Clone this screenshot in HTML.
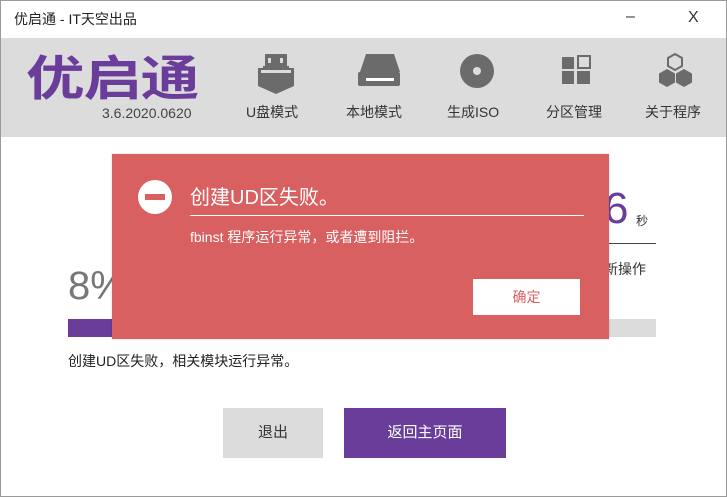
<!DOCTYPE html>
<html><head><meta charset="utf-8"><style>
*{margin:0;padding:0;box-sizing:border-box}
body{width:727px;height:497px;overflow:hidden;background:#fff;font-family:"Liberation Sans","Noto Sans CJK SC",sans-serif;position:relative}
.a{position:absolute;white-space:nowrap}
</style></head><body>
<div class="a" style="left:0;top:0;width:727px;height:497px;border:1px solid #9a9a9a"></div>
<div class="a" style="left:14px;top:9px;font-size:14px;color:#222">优启通 - IT天空出品</div>
<div class="a" style="left:626px;top:8px;font-size:16px;color:#333">–</div>
<div class="a" style="left:688px;top:9px;font-size:16px;color:#333">X</div>
<div class="a" style="left:1px;top:38px;width:725px;height:99px;background:#dcdcdc"></div>
<div class="a" style="left:26px;top:52px;font-size:48px;font-weight:bold;color:#6a3d9a;letter-spacing:-1px;line-height:56px;transform:scaleX(1.22);transform-origin:left top">优启通</div>
<div class="a" style="left:102px;top:105px;font-size:14px;color:#444">3.6.2020.0620</div>
<svg class="a" style="left:240px;top:40px" width="480" height="60" viewBox="0 0 480 60" fill="#6b6b6b">
<path d="M25 14h22v12h-22z M23 26h26v4h-26z M18 28h36v12h-36z"/>
<rect x="21" y="30" width="30" height="3" fill="#dcdcdc"/>
<path d="M18 40h36v6l-18 8l-18-8z"/>
<rect x="28" y="18" width="3" height="5" fill="#dcdcdc"/><rect x="40" y="18" width="3" height="5" fill="#dcdcdc"/>
<path d="M126 14h28l6 18h-40z"/><rect x="118" y="32" width="42" height="14" rx="2"/>
<rect x="126" y="38" width="28" height="3" fill="#fff"/>
<circle cx="237" cy="31" r="17"/><circle cx="237" cy="31" r="4" fill="#dcdcdc"/>
<rect x="322" y="17" width="12" height="12"/><rect x="338" y="16" width="12" height="12" fill="none" stroke="#6b6b6b" stroke-width="2"/>
<rect x="322" y="31" width="12" height="13"/><rect x="337" y="31" width="13" height="13"/>
<path d="M435 14l7 4v8l-7 4l-7-4v-8z" fill="none" stroke="#6b6b6b" stroke-width="2"/>
<path d="M427 29l8 4.5v9l-8 4.5l-8-4.5v-9z M444 29l8 4.5v9l-8 4.5l-8-4.5v-9z"/>
</svg>
<div class="a" style="left:246px;top:102px;font-size:14px;color:#333">U盘模式</div>
<div class="a" style="left:346px;top:102px;font-size:14px;color:#333">本地模式</div>
<div class="a" style="left:447px;top:102px;font-size:14px;color:#333">生成ISO</div>
<div class="a" style="left:546px;top:102px;font-size:14px;color:#333">分区管理</div>
<div class="a" style="left:645px;top:102px;font-size:14px;color:#333">关于程序</div>

<div class="a" style="left:604px;top:184px;font-size:44px;color:#6a3d9a;line-height:50px">6</div>
<div class="a" style="left:636px;top:212px;font-size:12px;color:#333">秒</div>
<div class="a" style="left:600px;top:243px;width:56px;height:1px;background:#444"></div>
<div class="a" style="left:604px;top:259px;font-size:14px;color:#333">新操作</div>
<div class="a" style="left:68px;top:262px;font-size:40px;color:#777;line-height:48px">8%</div>
<div class="a" style="left:68px;top:319px;width:588px;height:18px;background:#dcdcdc"></div>
<div class="a" style="left:68px;top:319px;width:50px;height:18px;background:#6a3d9a"></div>
<div class="a" style="left:68px;top:351px;font-size:14px;color:#222">创建UD区失败，相关模块运行异常。</div>

<div class="a" style="left:112px;top:154px;width:497px;height:185px;background:#d96060;box-shadow:0 0 2px rgba(0,0,0,.2)"></div>
<div class="a" style="left:138px;top:180px;width:34px;height:34px;border-radius:50%;background:#fff"></div>
<div class="a" style="left:145px;top:194px;width:20px;height:6px;background:#d96060"></div>
<div class="a" style="left:190px;top:181px;font-size:20px;color:#fff">创建UD区失败。</div>
<div class="a" style="left:190px;top:215px;width:394px;height:1px;background:#fff"></div>
<div class="a" style="left:190px;top:227px;font-size:14px;color:#fff">fbinst 程序运行异常，或者遭到阻拦。</div>
<div class="a" style="left:473px;top:279px;width:107px;height:36px;background:#fff;color:#d96060;font-size:14px;text-align:center;line-height:36px">确定</div>

<div class="a" style="left:223px;top:408px;width:100px;height:50px;background:#dcdcdc;color:#333;font-size:15px;text-align:center;line-height:50px">退出</div>
<div class="a" style="left:344px;top:408px;width:162px;height:50px;background:#6a3d9a;color:#fff;font-size:15px;text-align:center;line-height:50px">返回主页面</div>
</body></html>
